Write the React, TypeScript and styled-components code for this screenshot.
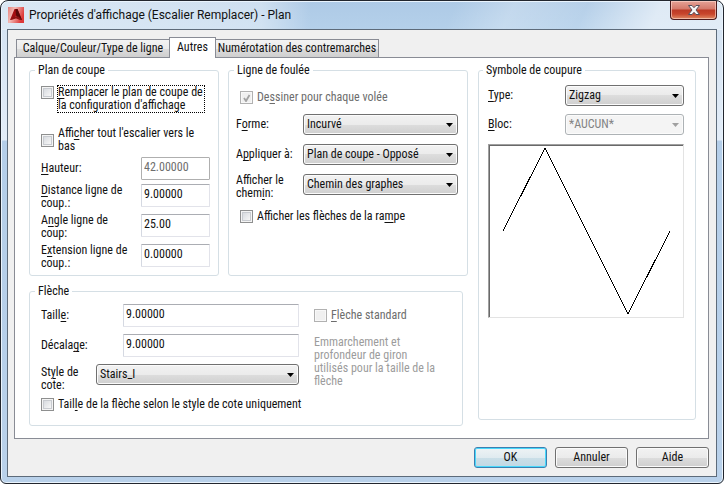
import React from 'react';
import styled, { createGlobalStyle, css } from 'styled-components';

const Global = createGlobalStyle`
  *, *::before, *::after { box-sizing: border-box; }
  html, body { margin: 0; padding: 0; background: #ffffff; }
  body, button, input, select {
    font-family: 'Roboto Condensed', 'Roboto', 'Liberation Sans', sans-serif;
    font-size: 12px;
    font-weight: 400;
    line-height: 13px;
    color: #111111;
  }
  u { text-decoration: underline; text-underline-offset: 2px; text-decoration-thickness: 1px; }
`;

const Window = styled.div`
  display: flex;
  flex-direction: column;
  min-height: 100vh;
  padding: 0 6px 6px;
  border: 1px solid #22262e;
  border-radius: 8px 8px 6px 6px;
  box-shadow: inset 0 0 0 1px #eaf4fd;
  background:
    linear-gradient(90deg, rgba(255, 255, 255, 0.55) 0, rgba(255, 255, 255, 0.4) 260px, rgba(255, 255, 255, 0) 310px) 0 0 / 100% 29px no-repeat,
    linear-gradient(115deg, rgba(255, 255, 255, 0) 62%, rgba(255, 255, 255, 0.25) 70%, rgba(255, 255, 255, 0.1) 80%, rgba(255, 255, 255, 0.6) 90%) 0 0 / 100% 29px no-repeat,
    linear-gradient(180deg, #aecae6 0, #b4d0ea 28px, #d5e3f2 29px, #e3edf8 139px, #b4cee9 140px, #b9d1ea 100%);
`;

const TitleBar = styled.header`
  display: flex;
  align-items: flex-start;
  height: 28px;
  gap: 5px;
  padding-left: 1px;
`;

const AppIcon = styled.svg`
  width: 16px;
  height: 16px;
  margin-top: 6px;
`;

const Title = styled.h1`
  flex: 1;
  margin: 5px 0 0;
  font-family: 'Roboto', 'Open Sans', sans-serif;
  font-size: 12px;
  line-height: 18px;
  font-weight: 400;
`;

const CloseButton = styled.button`
  display: flex;
  align-items: center;
  justify-content: center;
  width: 47px;
  height: 19px;
  padding: 0;
  border: 1px solid #4b1a1c;
  border-top: 0;
  border-radius: 0 0 4px 4px;
  box-shadow: inset 0 0 0 1px rgba(255, 220, 210, 0.6);
  background: linear-gradient(180deg, #e5a297 0, #d4796b 8px, #bc3a26 9px, #c8452c 13px, #df8a64 100%);
`;

const Client = styled.main`
  display: flex;
  flex-direction: column;
  flex: 1;
  padding: 7px 7px 8px 6px;
  border: 1px solid #5d6b7a;
  background: #f0f0f0;
`;

const TabList = styled.div`
  display: flex;
  align-items: flex-end;
  padding-left: 2px;
`;

const Tab = styled.button<{ $active?: boolean }>`
  height: 18px;
  min-width: 154px;
  padding: 0 2px;
  border: 1px solid #898c95;
  border-bottom: 0;
  margin-right: -1px;
  background: linear-gradient(180deg, #f3f3f3 0, #ebebeb 50%, #dddddd 50%, #cfcfcf 100%);
  ${(p) =>
    p.$active &&
    css`
      position: relative;
      height: 21px;
      min-width: 0;
      margin-bottom: -1px;
      padding: 0 7px 2px;
      background: #ffffff;
    `}
`;

const Page = styled.div`
  display: grid;
  grid-template-columns: 439fr 218fr;
  column-gap: 10px;
  padding: 6px 12px 12px 14px;
  border: 1px solid #898c95;
  background: #ffffff;
`;

const LeftColumn = styled.div`
  display: flex;
  flex-direction: column;
  gap: 9px;
`;

const TopGroups = styled.div`
  display: grid;
  grid-template-columns: 190fr 240fr;
  column-gap: 9px;
`;

const Group = styled.fieldset<{ $pad: string; $margin?: string }>`
  min-width: 0;
  margin: ${(p) => p.$margin ?? '0'};
  padding: ${(p) => p.$pad};
  border: 1px solid #d5dfe5;
  border-radius: 3px;
`;

const Legend = styled.legend<{ $indent: number }>`
  height: 13px;
  margin-left: ${(p) => p.$indent}px;
  padding: 0 3px;
`;

const Check = styled.label<{ $indent?: number; $top?: number; $disabled?: boolean }>`
  display: flex;
  align-items: center;
  gap: 4px;
  margin: ${(p) => p.$top ?? 0}px 0 0 ${(p) => p.$indent ?? 0}px;
  color: ${(p) => (p.$disabled ? '#6d6d6d' : '#111111')};
  white-space: nowrap;
`;

const CheckRowTop = styled(Check)`
  align-items: flex-start;
`;

const tick =
  "url(\"data:image/svg+xml,%3Csvg xmlns='http://www.w3.org/2000/svg' width='13' height='13'%3E%3Cpath d='M4 6l2 3 3.5-6' fill='none' stroke='%23a3a3a3' stroke-width='1.8'/%3E%3C/svg%3E\")";

const CheckBox = styled.input.attrs({ type: 'checkbox' })`
  appearance: none;
  flex: none;
  width: 13px;
  height: 13px;
  margin: 0;
  border: 1px solid #8e8f8f;
  box-shadow: inset 0 0 0 1px #f4f4f4, inset 0 0 0 2px #c8cbd0;
  background: linear-gradient(135deg, #cfd3d9 0, #f6f6f6 80%);
  &:disabled {
    border-color: #b1b1b1;
    box-shadow: inset 0 0 0 1px #f8f8f8;
    background: #f0f0f0;
  }
  &:checked {
    background: ${tick} -1px 0 no-repeat, #f0f0f0;
  }
`;

const FocusText = styled.span`
  padding-right: 1px;
  outline: 1px dotted #000000;
`;

const FieldGrid = styled.div<{ $cols: string; $rowGap: number; $top: number }>`
  display: grid;
  grid-template-columns: ${(p) => p.$cols};
  row-gap: ${(p) => p.$rowGap}px;
  align-items: start;
  margin-top: ${(p) => p.$top}px;
`;

const FieldLabel = styled.label`
  align-self: center;
  white-space: nowrap;
`;

const TextBox = styled.input.attrs({ type: 'text' })`
  width: 100%;
  min-width: 0;
  height: 23px;
  padding: 0 2px 3px;
  border: 1px solid #e2e3ea;
  border-top-color: #abadb3;
  border-left-color: #d5d9e2;
  border-radius: 1px;
  background: #ffffff;
  &:disabled {
    border-color: #afafaf;
    color: #6d6d6d;
  }
`;

const SelectFrame = styled.span`
  position: relative;
  display: block;
  flex: 1;
  min-width: 0;
`;

const SelectBox = styled.select`
  appearance: none;
  display: block;
  width: 100%;
  height: 21px;
  padding: 0 20px 0 3px;
  border: 1px solid #707070;
  border-radius: 3px;
  box-shadow: inset 0 0 0 1px #fbfbfb;
  background: linear-gradient(180deg, #f2f2f2 0, #ebebeb 50%, #dddddd 50%, #cfcfcf 100%);
  line-height: 19px;
  &:disabled {
    border-color: #adb2b5;
    background: #f4f4f4;
    color: #838383;
    opacity: 1;
  }
`;

const Arrow = styled.svg`
  position: absolute;
  top: 9px;
  right: 5px;
  width: 7px;
  height: 4px;
  pointer-events: none;
`;

const ArrowColumns = styled.div`
  display: flex;
  gap: 15px;
`;

const ArrowFields = styled.div`
  display: flex;
  flex-direction: column;
  flex: 0 1 258px;
  gap: 7px;
`;

const FieldRow = styled.div<{ $label: number; $tall?: boolean }>`
  display: flex;
  align-items: ${(p) => (p.$tall ? 'flex-start' : 'center')};
  min-height: ${(p) => (p.$tall ? 28 : 23)}px;
  > label {
    flex: 0 0 ${(p) => p.$label}px;
    align-self: ${(p) => (p.$tall ? 'flex-end' : 'center')};
  }
`;

const Hint = styled.p`
  margin: 14px 0 0;
  color: #9c9c9c;
  white-space: nowrap;
`;

const Preview = styled.div`
  margin: 9px 0 0;
  border: 1px solid #e3e3e3;
  border-top-color: #a0a0a0;
  border-left-color: #a0a0a0;
  box-shadow: inset 1px 1px 0 #696969;
  svg { display: block; width: 100%; height: auto; }
`;

const Footer = styled.footer`
  display: flex;
  justify-content: flex-end;
  gap: 8px;
  padding-top: 8px;
`;

const PushButton = styled.button<{ $primary?: boolean }>`
  width: 73px;
  height: 21px;
  padding: 0;
  border: 1px solid ${(p) => (p.$primary ? '#3c7fb1' : '#707070')};
  border-radius: 3px;
  box-shadow: ${(p) => (p.$primary ? 'inset 0 0 0 1px #48d8fb' : 'inset 0 0 0 1px #fbfbfb')};
  background: ${(p) =>
    p.$primary
      ? 'linear-gradient(180deg, #eef3f5 0, #e0ebf0 50%, #cbdfe8 50%, #c0d8e4 100%)'
      : 'linear-gradient(180deg, #f2f2f2 0, #ebebeb 50%, #dddddd 50%, #cfcfcf 100%)'};
`;

function Dropdown({ id, value, disabled }: { id: string; value: string; disabled?: boolean }) {
  return (
    <SelectFrame>
      <SelectBox id={id} disabled={disabled} defaultValue={value}>
        <option>{value}</option>
      </SelectBox>
      <Arrow viewBox="0 0 7 4" aria-hidden="true">
        <path d="M0 0H7L3.5 4Z" fill={disabled ? '#a0a0a0' : '#000000'} />
      </Arrow>
    </SelectFrame>
  );
}

export default function App() {
  return (
    <>
      <Global />
      <Window>
        <TitleBar>
          <AppIcon viewBox="0 0 16 16" aria-hidden="true">
            <defs>
              <linearGradient id="tile" x1="0" y1="0" x2="1" y2="0.4">
                <stop offset="0" stopColor="#e8807a" />
                <stop offset="0.4" stopColor="#f3b9b4" />
                <stop offset="1" stopColor="#dd3a3a" />
              </linearGradient>
            </defs>
            <rect width="16" height="16" fill="url(#tile)" />
            <path d="M2 13L6.5 2H9.5L14 13L10 12L8 9L6 12Z" fill="#a50f12" />
            <path d="M7.5 2H9.5L14 13L10 12L8 8Z" fill="#5a0808" />
            <path d="M2 13L5.5 9.5L10.5 9.5L14 13L8 11.5Z" fill="#8e1212" />
          </AppIcon>
          <Title>Propriétés d'affichage (Escalier Remplacer) - Plan</Title>
          <CloseButton aria-label="Fermer">
            <svg width="12" height="10" viewBox="0 0 12 10" aria-hidden="true">
              <path d="M0.5 0.5H4L6 2.7L8 0.5H11.5L8 5L11.5 9.5H8L6 7.3L4 9.5H0.5L4 5Z" fill="#f7f7f7" stroke="#56505c" />
            </svg>
          </CloseButton>
        </TitleBar>
        <Client>
          <TabList role="tablist">
            <Tab role="tab">Calque/Couleur/Type de ligne</Tab>
            <Tab role="tab" $active aria-selected="true">Autres</Tab>
            <Tab role="tab">Numérotation des contremarches</Tab>
          </TabList>
          <Page role="tabpanel">
            <LeftColumn>
              <TopGroups>
                <Group $pad="9px 8px 5px 11px">
                  <Legend $indent={-6}>Plan de coupe</Legend>
                  <CheckRowTop>
                    <CheckBox />
                    <FocusText>
                      <u>R</u>emplacer le plan de coupe de
                      <br />
                      la configuration d'affichage
                    </FocusText>
                  </CheckRowTop>
                  <Check $top={15}>
                    <CheckBox />
                    <span>
                      Affi<u>c</u>her tout l'escalier vers le
                      <br />
                      bas
                    </span>
                  </Check>
                  <FieldGrid $cols="100px 1fr" $rowGap={4} $top={4}>
                    <FieldLabel htmlFor="height"><u>H</u>auteur:</FieldLabel>
                    <TextBox id="height" defaultValue="42.00000" disabled />
                    <FieldLabel htmlFor="distance"><u>D</u>istance ligne de<br />coup.:</FieldLabel>
                    <TextBox id="distance" defaultValue="9.00000" />
                    <FieldLabel htmlFor="angle">A<u>n</u>gle ligne de<br />coup:</FieldLabel>
                    <TextBox id="angle" defaultValue="25.00" />
                    <FieldLabel htmlFor="extension">E<u>x</u>tension ligne de<br />coup.:</FieldLabel>
                    <TextBox id="extension" defaultValue="0.00000" />
                  </FieldGrid>
                </Group>
                <Group $pad="14px 9px 5px 7px">
                  <Legend $indent={-2}>Ligne de foulée</Legend>
                  <Check $indent={4} $disabled>
                    <CheckBox defaultChecked disabled />
                    <span>De<u>s</u>siner pour chaque volée</span>
                  </Check>
                  <FieldGrid $cols="67px 1fr" $rowGap={9} $top={10}>
                    <FieldLabel htmlFor="shape">F<u>o</u>rme:</FieldLabel>
                    <Dropdown id="shape" value="Incurvé" />
                    <FieldLabel htmlFor="apply">A<u>p</u>pliquer à:</FieldLabel>
                    <Dropdown id="apply" value="Plan de coupe - Opposé" />
                    <FieldLabel htmlFor="path">Afficher le<br />chem<u>i</u>n:</FieldLabel>
                    <Dropdown id="path" value="Chemin des graphes" />
                  </FieldGrid>
                  <Check $indent={4} $top={10}>
                    <CheckBox />
                    <span>Afficher les flèches de la ra<u>m</u>pe</span>
                  </Check>
                </Group>
              </TopGroups>
              <Group $pad="6px 11px 14px" $margin="0 5px 0 0">
                <Legend $indent={-6}>Flèche</Legend>
                <ArrowColumns>
                  <ArrowFields>
                    <FieldRow $label={82}>
                      <label htmlFor="size">Taill<u>e</u>:</label>
                      <TextBox id="size" defaultValue="9.00000" />
                    </FieldRow>
                    <FieldRow $label={82}>
                      <label htmlFor="offset">Décala<u>g</u>e:</label>
                      <TextBox id="offset" defaultValue="9.00000" />
                    </FieldRow>
                    <FieldRow $label={55} $tall>
                      <label htmlFor="dim">St<u>y</u>le de<br />cote:</label>
                      <Dropdown id="dim" value="Stairs_I" />
                    </FieldRow>
                  </ArrowFields>
                  <div>
                    <Check $top={5} $disabled>
                      <CheckBox disabled />
                      <span><u>F</u>lèche standard</span>
                    </Check>
                    <Hint>
                      Emmarchement et<br />
                      profondeur de giron<br />
                      utilisés pour la taille de la<br />
                      flèche
                    </Hint>
                  </div>
                </ArrowColumns>
                <Check $top={6}>
                  <CheckBox />
                  <span>Tail<u>l</u>e de la flèche selon le style de cote uniquement</span>
                </Check>
              </Group>
            </LeftColumn>
            <Group $pad="8px 11px 5px 9px" $margin="0 0 6px">
              <Legend $indent={-5}>Symbole de coupure</Legend>
              <FieldGrid $cols="77px 1fr" $rowGap={8} $top={0}>
                <FieldLabel htmlFor="type"><u>T</u>ype:</FieldLabel>
                <Dropdown id="type" value="Zigzag" />
                <FieldLabel htmlFor="block"><u>B</u>loc:</FieldLabel>
                <Dropdown id="block" value="*AUCUN*" disabled />
              </FieldGrid>
              <Preview>
                <svg viewBox="0 0 194 172" aria-label="Zigzag">
                  <polyline points="14,86 56,3 139,169 181,86" fill="none" stroke="#000000" strokeWidth="1" shapeRendering="crispEdges" />
                </svg>
              </Preview>
            </Group>
          </Page>
          <Footer>
            <PushButton $primary>OK</PushButton>
            <PushButton>Annuler</PushButton>
            <PushButton>Aide</PushButton>
          </Footer>
        </Client>
      </Window>
    </>
  );
}
